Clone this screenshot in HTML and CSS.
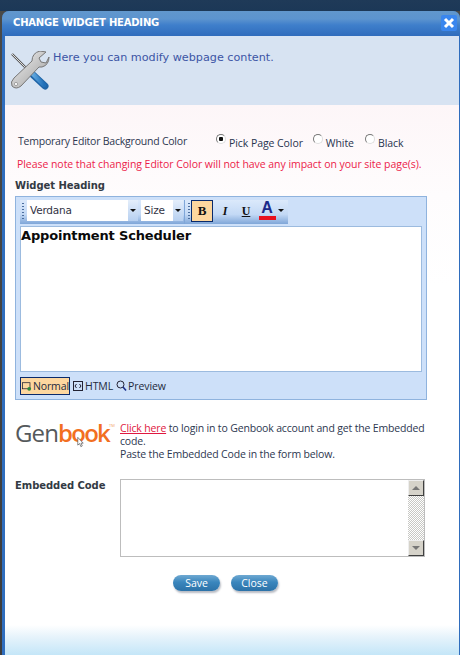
FILE: index.html
```html
<!DOCTYPE html>
<html lang="en">
<head>
<meta charset="utf-8">
<title>Change Widget Heading</title>
<link rel="stylesheet" href="styles.css">
</head>
<body>
<div class="window">
  <header class="titlebar">
    <h1 class="title">CHANGE WIDGET HEADING</h1>
    <button class="close-x" aria-label="Close">
      <svg width="12" height="12" viewBox="0 0 12 12"><path d="M2 2 L10 10 M10 2 L2 10" stroke="#fff" stroke-width="3"/></svg>
    </button>
  </header>
  <section class="info">
    <svg class="tools" width="40" height="40" viewBox="0 0 40 40">
      <defs>
        <linearGradient id="metal" x1="0" y1="0" x2="1" y2="1"><stop offset="0" stop-color="#f4f4f4"/><stop offset="1" stop-color="#9a9a9a"/></linearGradient>
        <linearGradient id="blue" x1="0" y1="0" x2="1" y2="0"><stop offset="0" stop-color="#6db2e6"/><stop offset="1" stop-color="#1f6fb8"/></linearGradient>
      </defs>
      <path d="M2 3 L18 19" stroke="#555" stroke-width="2.4"/>
      <path d="M2 3 L18 19" stroke="#ddd" stroke-width="1"/>
      <path d="M21 22 L35 35" stroke="#1f65a8" stroke-width="7" stroke-linecap="round"/>
      <path d="M21 21 L34 34" stroke="url(#blue)" stroke-width="4.5" stroke-linecap="round"/>
      <path d="M36 1 L29 7 L31 11 L36 12 L39 6 Q39 14 32 16 L29 16 L11 35 Q6 39 2 35 Q0 31 4 27 L22 10 Q22 2 30 0 Z" fill="url(#metal)" stroke="#777" stroke-width="1"/>
      <circle cx="6" cy="33" r="1.6" fill="#fff" stroke="#888" stroke-width=".7"/>
    </svg>
    <p class="info-text">Here you can modify webpage content.</p>
  </section>
  <main class="content">
    <div class="color-row">
      <span class="color-label">Temporary Editor Background Color</span>
      <label class="radio radio-first"><i class="dot on"></i>Pick Page Color</label>
      <label class="radio radio-second"><i class="dot"></i>White</label>
      <label class="radio"><i class="dot"></i>Black</label>
    </div>
    <p class="notice">Please note that changing Editor Color will not have any impact on your site page(s).</p>
    <h2 class="section-label">Widget Heading</h2>
    <div class="editor">
      <div class="toolbar">
        <span class="grip"></span>
        <span class="select select-font">Verdana<b class="sel-arrow"></b></span>
        <span class="select select-size">Size<b class="sel-arrow"></b></span>
        <span class="tb-sep"></span>
        <span class="grip grip-2"></span>
        <div class="tools-group">
          <span class="tb-btn tb-bold">B</span>
          <span class="tb-btn tb-italic">I</span>
          <span class="tb-btn tb-under">U</span>
          <span class="tb-color">A<i class="color-bar"></i></span>
          <b class="tb-arrow"></b>
        </div>
      </div>
      <div class="canvas">Appointment Scheduler</div>
      <div class="modes">
        <span class="mode mode-on">
          <svg width="13" height="13" viewBox="0 0 13 13"><rect x=".5" y="1.5" width="10" height="8" fill="none" stroke="#223" /><circle cx="9.5" cy="9.5" r="2.5" fill="#2a8a3a"/></svg>Normal</span>
        <span class="mode">
          <svg width="11" height="11" viewBox="0 0 11 11"><rect x=".5" y=".5" width="9" height="9" fill="none" stroke="#223"/><path d="M3.5 3 L2 5 L3.5 7 M6.5 3 L8 5 L6.5 7" fill="none" stroke="#223"/></svg>HTML</span>
        <span class="mode">
          <svg width="11" height="12" viewBox="0 0 11 12"><circle cx="4.5" cy="4.5" r="3.5" fill="none" stroke="#223"/><path d="M7 7 L10 10.5" stroke="#1b2f8a" stroke-width="1.6"/></svg>Preview</span>
      </div>
    </div>
    <div class="genbook">
      <div class="logo">
        <span class="logo-gen">Gen</span><span class="logo-book">book</span><sup class="logo-tm">TM</sup>
        <svg class="cursor" width="7" height="12" viewBox="0 0 9 14"><path d="M1 1 L1 11 L3.4 9 L5 13 L6.8 12 L5.2 8.5 L8 8.5 Z" fill="#fff" stroke="#555" stroke-width=".9"/></svg>
      </div>
      <p class="genbook-text"><a class="link" href="#">Click here</a> to login in to Genbook account and get the Embedded code.<br>Paste the Embedded Code in the form below.</p>
    </div>
    <div class="code-row">
      <h2 class="section-label code-label">Embedded Code</h2>
      <div class="code-box">
        <div class="scrollbar">
          <span class="sb-btn"><i class="tri-up"></i></span>
          <span class="sb-track"></span>
          <span class="sb-btn"><i class="tri-down"></i></span>
        </div>
      </div>
    </div>
    <div class="actions">
      <button class="pill">Save</button>
      <button class="pill">Close</button>
    </div>
  </main>
  <footer class="foot"></footer>
</div>
</body>
</html>
```
FILE: styles.css
```css
* { box-sizing: border-box; }
html, body { margin: 0; height: 655px; overflow: hidden; }
body {
  background: linear-gradient(#1f3a58, #1c3857 11px, #4a4a48 11px, #3c3c3c);
  font-family: "DejaVu Sans", sans-serif;
  padding: 11px 0 0 2px;
}
.window {
  width: 458px;
  height: 644px;
  background: #2f6dbd;
  border-radius: 7px 7px 0 0;
  padding: 0 1px 0 3px;
  display: flex;
  flex-direction: column;
}
.titlebar {
  height: 25px;
  margin: 0 -1px 0 -3px;
  padding: 0 3px 0 11px;
  flex: none;
  display: flex;
  align-items: flex-start;
  justify-content: space-between;
  border-radius: 7px 7px 0 0;
  background: linear-gradient(#6197cd, #5c94cf 8px, #3f7fcb 14px, #2f6cbc);
}
.title {
  margin: 6px 0 0;
  font: bold 10px/12px "DejaVu Sans", sans-serif;
  letter-spacing: -.2px;
  color: #fff;
}
.close-x {
  margin-top: 4px;
  width: 16px;
  height: 16px;
  padding: 0;
  border: 0;
  border-radius: 2px;
  background: #3a86ee;
  display: flex;
  align-items: center;
  justify-content: center;
}
.info {
  height: 69px;
  flex: none;
  background: #d7e3f2;
  display: flex;
  align-items: flex-start;
  padding: 14px 0 0 5px;
}
.tools { flex: none; margin-top: 1px; }
.info-text {
  margin: 1px 0 0 3px;
  font: 11.2px/14px "DejaVu Sans", sans-serif;
  color: #3c55a5;
}
.content {
  flex: 1;
  background: linear-gradient(#fdf6f8, #fefcfd 90px, #fff 180px);
  color: #28344f;
  padding: 29px 0 0 10px;
  font: 10.5px/13px "Open Sans", "DejaVu Sans", sans-serif;
  letter-spacing: -.07px;
}
.color-row {
  display: flex;
  align-items: flex-start;
  height: 23px;
  padding-left: 3px;
}
.color-label { color: #2d3750; width: 198px; line-height: 14px; letter-spacing: -.22px; }
.radio { display: flex; align-items: flex-start; line-height: 14px; padding-top: 2px; }
.radio-first { margin-right: 10px; }
.radio-second { margin-right: 11px; }
.dot {
  width: 10px;
  height: 10px;
  margin-right: 3px;
  border-radius: 50%;
  background: #fff;
  border: 1px solid #777;
  border-right-color: #ddd;
  border-bottom-color: #ddd;
  position: relative;
  top: -2px;
}
.dot.on { background: radial-gradient(circle, #111 0 2px, #fff 2.5px); }
.notice {
  margin: 0;
  color: #ec1c4a;
  height: 14px;
  line-height: 14px;
  padding-left: 2px;
  letter-spacing: -.05px;
}
.section-label {
  margin: 8px 0 0;
  font: bold 10px/13px "DejaVu Sans", sans-serif;
  letter-spacing: -.05px;
  color: #333a44;
}
.editor {
  margin-top: 4px;
  width: 412px;
  height: 204px;
  background: #cde0f9;
  border: 1px solid #8fb3de;
  display: flex;
  flex-direction: column;
  padding: 3px 4px 0 4px;
}
.toolbar {
  display: flex;
  align-items: flex-start;
  height: 24px;
  flex: none;
  width: 268px;
  background: linear-gradient(#dbe9fb, #c3d9f5 60%, #7fa6d8);
  padding-left: 1px;
}
.grip {
  width: 2px;
  height: 17px;
  margin: 3px 3px 0 1px;
  flex: none;
  background: repeating-linear-gradient(#4d6f9f 0 1px, transparent 1px 3px);
}
.select {
  height: 21px;
  display: flex;
  align-items: center;
  justify-content: space-between;
  background: #fff;
  font: 10.5px/21px "DejaVu Sans", sans-serif;
  color: #334;
  padding-left: 3px;
  margin-right: 3px;
  letter-spacing: -.2px;
}
.select-font { width: 111px; }
.select-size { width: 42px; margin-right: 1px; }
.sel-arrow {
  width: 10px;
  height: 21px;
  background: linear-gradient(#e4eefb, #b7d0f0);
  position: relative;
}
.sel-arrow::after, .tb-arrow::after {
  content: "";
  position: absolute;
  left: 2px;
  top: 9px;
  border: 3px solid transparent;
  border-top: 3px solid #111;
  border-bottom: 0;
}
.tb-sep { width: 1px; height: 24px; background: #7fa6d8; }
.grip-2 { margin-left: 3px; margin-right: 1px; }
.tools-group { display: flex; align-items: flex-start; height: 24px; }
.tb-btn {
  width: 20px;
  height: 22px;
  font: bold 12px/22px "Liberation Serif", serif;
  text-align: center;
  color: #111;
  margin-right: 1px;
}
.tb-bold {
  width: 22px;
  margin: 0 2px 0 0;
  background: #fdd79f;
  border: 1px solid #0a2a6b;
  font-size: 13px;
  line-height: 20px;
}
.tb-italic { font-style: italic; }
.tb-under { text-decoration: underline; }
.tb-color {
  width: 18px;
  height: 22px;
  margin-left: 1px;
  font: bold 16px/16px "Liberation Sans", sans-serif;
  color: #1b2a8a;
  text-align: center;
  display: flex;
  flex-direction: column;
  align-items: center;
}
.color-bar { width: 17px; height: 4px; background: #e8111e; }
.tb-arrow { width: 10px; height: 22px; position: relative; }
.canvas {
  margin-top: 2px;
  height: 146px;
  flex: none;
  background: #fff;
  border: 1px solid #9cbbdf;
  padding: 1px 0 0 0;
  font: bold 13px/15px "DejaVu Sans", sans-serif;
  letter-spacing: -.16px;
  color: #0a0a0a;
}
.modes {
  display: flex;
  align-items: center;
  gap: 3px;
  margin-top: 5px;
  height: 18px;
  font: 10.5px/16px "Open Sans", "DejaVu Sans", sans-serif;
  letter-spacing: -.1px;
  color: #1e2a3c;
}
.mode { display: flex; align-items: center; height: 18px; gap: 1px; }
.mode-on {
  width: 50px;
  background: #fdd79f;
  border: 1px solid #0a2a6b;
  padding-left: 1px;
}
.genbook {
  display: flex;
  margin-top: 20px;
  height: 59px;
}
.logo {
  width: 105px;
  flex: none;
  position: relative;
  font: 24px/25px "Open Sans", sans-serif;
  white-space: nowrap;
}
.logo-gen { color: #55595c; letter-spacing: -.9px; }
.logo-book { color: #f26f21; font-weight: 600; letter-spacing: -1.7px; }
.logo-tm { font-size: 4px; color: #f2a36a; position: absolute; top: 3px; left: 94px; line-height: 6px; letter-spacing: 0; }
.cursor { position: absolute; left: 62px; top: 16px; }
.genbook-text { margin: 2px 0 0; width: 312px; line-height: 13px; color: #2d3750; letter-spacing: -.16px; }
.link { color: #e01840; text-decoration: underline; }
.code-row { display: flex; height: 78px; margin-top: 0; }
.code-label { width: 105px; margin: 0; flex: none; }
.code-box {
  width: 305px;
  height: 78px;
  background: #fff;
  border: 1px solid #bdbdbd;
  display: flex;
  justify-content: flex-end;
}
.scrollbar { width: 16px; display: flex; flex-direction: column; }
.sb-track {
  flex: 1;
  background: repeating-conic-gradient(#c8c8c4 0 25%, #fff 0 50%) 0 0 / 2px 2px;
}
.sb-btn {
  height: 16px;
  flex: none;
  background: #d6d3ca;
  border: 1px solid;
  border-color: #eee #404040 #404040 #eee;
  display: flex;
  align-items: center;
  justify-content: center;
}
.tri-up { border: 4px solid transparent; border-bottom: 4px solid #777; border-top: 0; }
.tri-down { border: 4px solid transparent; border-top: 4px solid #777; border-bottom: 0; }
.actions { display: flex; gap: 11px; margin: 18px 0 0 158px; }
.pill {
  width: 47px;
  height: 16px;
  padding: 0;
  border: 0;
  border-radius: 8px;
  background: linear-gradient(#6fa9d2, #3a86bd 45%, #2c72a8);
  box-shadow: 1px 2px 2px #b9bcc4;
  color: #fff;
  font: 10.5px/16px "Open Sans", "DejaVu Sans", sans-serif;
}
.foot {
  height: 30px;
  flex: none;
  background: linear-gradient(#fff, #e6f3fb 40%, #c4e6f8);
}
```
